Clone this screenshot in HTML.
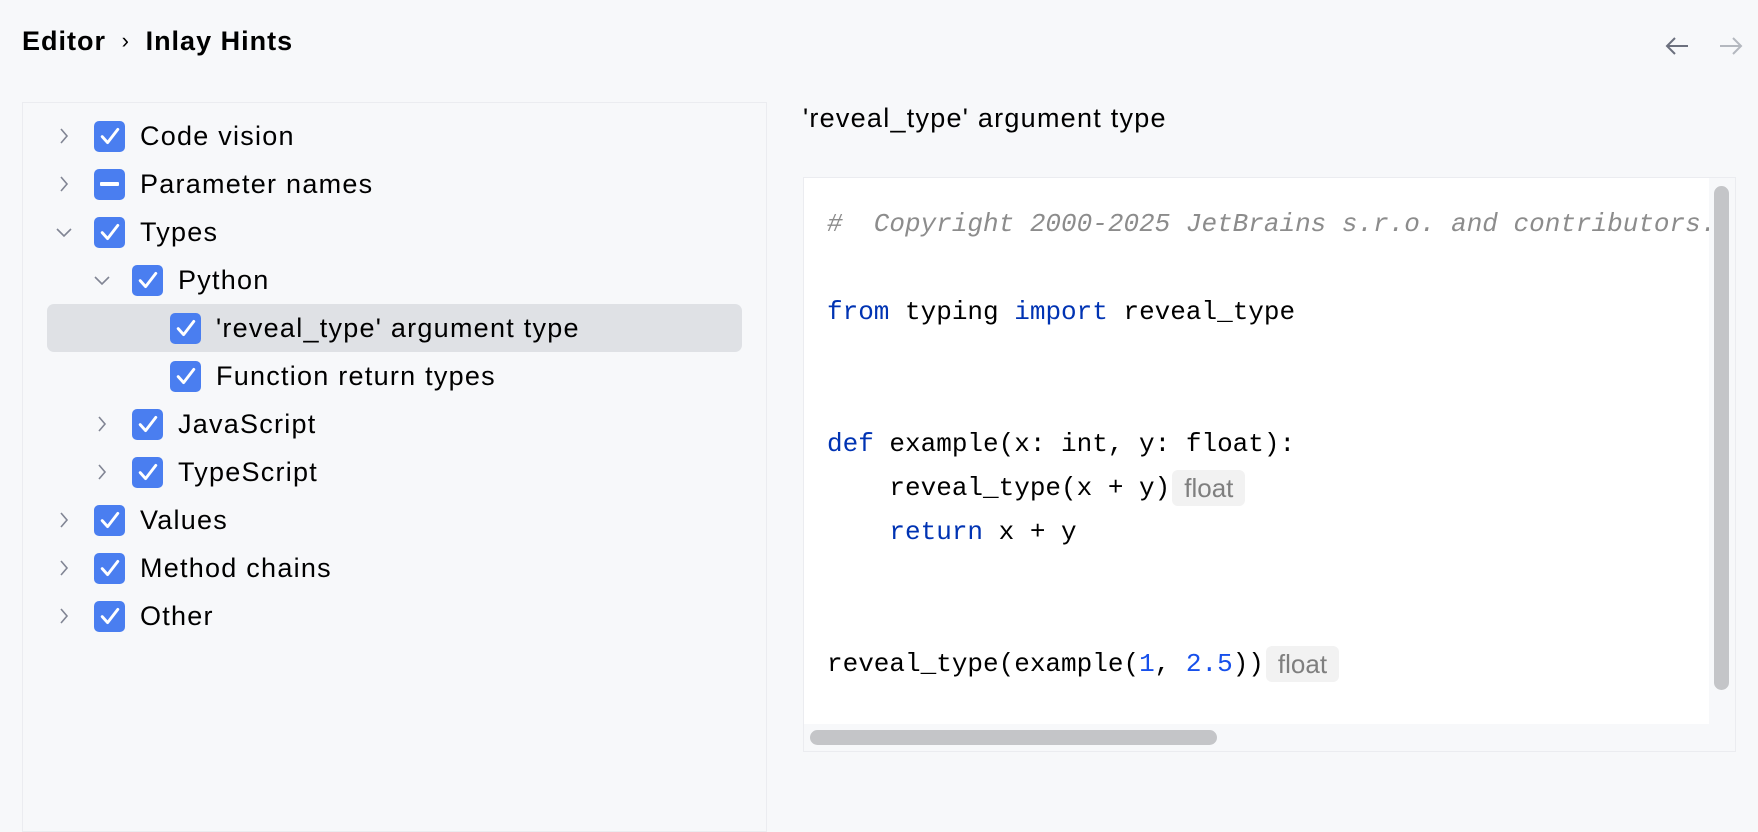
<!DOCTYPE html>
<html><head><style>
*{margin:0;padding:0;box-sizing:border-box}
body{width:1758px;height:816px;background:#f7f8fa;font-family:"Liberation Sans",sans-serif;color:#000;position:relative;overflow:hidden}
.t{position:absolute;white-space:pre}
.title{left:22px;top:26px;font-size:27px;font-weight:bold;letter-spacing:1px}
.left{position:absolute;left:22px;top:102px;width:745px;height:730px;border:1px solid #ebecf0;background:#f7f8fa}
.sel{position:absolute;left:47px;top:304px;width:695px;height:48px;background:#dfe1e5;border-radius:7px}
.row{position:absolute;height:48px;display:flex;align-items:center;font-size:27px;letter-spacing:1.25px}
.cb{width:31px;height:31px;border-radius:5px;background:#4a7ef0;margin-right:15px;display:flex;align-items:center;justify-content:center;flex:none}
.chev{position:absolute;width:20px;height:20px}
.code{position:absolute;left:803px;top:177px;width:933px;height:575px;border:1px solid #ebecf0;background:#fff}
.ln{position:absolute;left:23px;font-family:"Liberation Mono",monospace;font-size:26px;height:44px;line-height:44px;white-space:pre}
.k{color:#0033b3}.n{color:#1750eb}.c{color:#8c8c8c;font-style:italic}
.hint{display:inline-block;background:#f2f2f2;color:#7f7f7f;font-family:"Liberation Sans",sans-serif;font-size:26px;line-height:36px;height:36px;padding:0 12px;border-radius:6px;vertical-align:middle;margin-left:2px}
</style></head><body>
<div class="t title">Editor <span style="font-weight:normal;font-size:22px;position:relative;top:-2px">&nbsp;›&nbsp;</span> Inlay Hints</div>
<svg style="position:absolute;left:1664px;top:34px" width="26" height="24" viewBox="0 0 26 24"><path d="M24 12H3M11 4l-8 8 8 8" stroke="#6c707e" stroke-width="2" fill="none"/></svg>
<svg style="position:absolute;left:1718px;top:34px" width="26" height="24" viewBox="0 0 26 24"><path d="M2 12h21M15 4l8 8-8 8" stroke="#b4b8bf" stroke-width="2" fill="none"/></svg>

<div class="left"></div>
<div class="sel"></div>

<div id="tree"></div>

<div class="t" style="left:803px;top:103px;font-size:27px;letter-spacing:1.25px">'reveal_type' argument type</div>

<div class="code">
<div class="ln c" style="top:24px"># &nbsp;Copyright 2000-2025 JetBrains s.r.o. and contributors.</div>
<div class="ln" style="top:112px"><span class="k">from</span> typing <span class="k">import</span> reveal_type</div>
<div class="ln" style="top:244px"><span class="k">def</span> example(x: int, y: float):</div>
<div class="ln" style="top:288px">    reveal_type(x + y)<span class="hint">float</span></div>
<div class="ln" style="top:332px">    <span class="k">return</span> x + y</div>
<div class="ln" style="top:464px">reveal_type(example(<span class="n">1</span>, <span class="n">2.5</span>))<span class="hint">float</span></div>
<div style="position:absolute;right:0;top:0;width:26px;height:100%;background:#f7f8fa"></div>
<div style="position:absolute;left:0;bottom:0;width:100%;height:27px;background:#f7f8fa"></div>
<div style="position:absolute;left:910px;top:8px;width:15px;height:504px;background:#c4c5c8;border-radius:8px"></div>
<div style="position:absolute;left:6px;top:552px;width:407px;height:15px;background:#c4c5c8;border-radius:8px"></div>
</div>

<script>
const rows=[
[0,'r','c','Code vision'],[0,'r','m','Parameter names'],[0,'d','c','Types'],
[1,'d','c','Python'],[2,'','c',"'reveal_type' argument type"],[2,'','c','Function return types'],
[1,'r','c','JavaScript'],[1,'r','c','TypeScript'],[0,'r','c','Values'],[0,'r','c','Method chains'],[0,'r','c','Other']];
let h='';
rows.forEach((r,i)=>{
 const top=112+i*48, x=94+r[0]*38;
 if(r[1]){const cx=x-40;
  const p=r[1]=='r'?'M7 3l6 7-6 7':'M3 7l7 7 7-7';
  h+=`<svg class="chev" style="left:${cx}px;top:${top+14}px" viewBox="0 0 20 20"><path d="${p}" stroke="#818594" stroke-width="1.6" fill="none"/></svg>`;}
 const ic=r[2]=='c'?'<svg width="24" height="24" viewBox="0 0 20 20"><path d="M3.5 10.5l4.5 5 8.5-11" stroke="#fff" stroke-width="2.4" fill="none" stroke-linecap="round" stroke-linejoin="round"/></svg>':'<div style="width:19px;height:4px;background:#fff;border-radius:1px"></div>';
 h+=`<div class="row" style="left:${x}px;top:${top}px"><div class="cb">${ic}</div>${r[3]}</div>`;
});
document.getElementById('tree').innerHTML=h;
</script>
</body></html>
